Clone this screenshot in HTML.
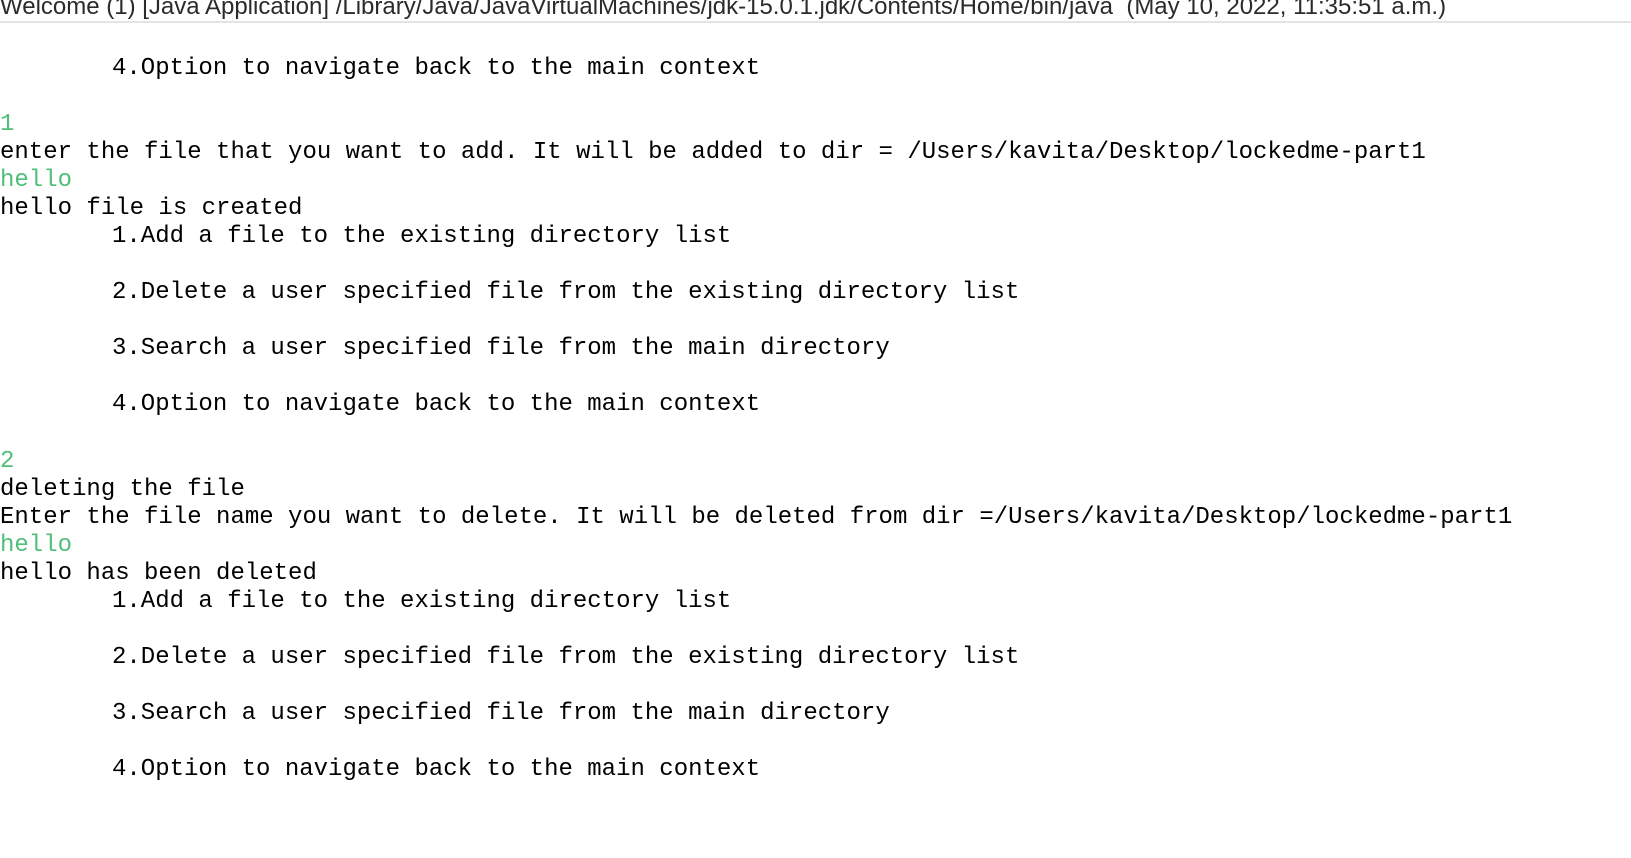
<!DOCTYPE html>
<html><head><meta charset="utf-8"><style>
html,body{margin:0;padding:0;background:#fff;width:1631px;height:858px;overflow:hidden;}
.hdr{position:absolute;left:0;top:-6px;font-family:"Liberation Sans",sans-serif;font-size:24px;color:#2b2b2b;white-space:pre;line-height:26px;}
.sep{position:absolute;left:0;top:21px;width:1631px;height:2px;background:#e4e4e4;}
.con{position:absolute;left:0;top:54.5px;font-family:"Liberation Mono",monospace;font-size:24px;line-height:28.08px;color:#000;}
.con div{height:28.08px;white-space:pre;}
.i{padding-left:112px;}
.g{color:#4fbf79;}
</style></head><body>
<div class="hdr">Welcome (1) [Java Application] /Library/Java/JavaVirtualMachines/jdk-15.0.1.jdk/Contents/Home/bin/java  (May 10, 2022, 11:35:51 a.m.)</div>
<div class="sep"></div>
<div class="con">
<div class="i">4.Option to navigate back to the main context</div>
<div></div>
<div class="g">1</div>
<div>enter the file that you want to add. It will be added to dir = /Users/kavita/Desktop/lockedme-part1</div>
<div class="g">hello</div>
<div>hello file is created</div>
<div class="i">1.Add a file to the existing directory list</div>
<div></div>
<div class="i">2.Delete a user specified file from the existing directory list</div>
<div></div>
<div class="i">3.Search a user specified file from the main directory</div>
<div></div>
<div class="i">4.Option to navigate back to the main context</div>
<div></div>
<div class="g">2</div>
<div>deleting the file</div>
<div>Enter the file name you want to delete. It will be deleted from dir =/Users/kavita/Desktop/lockedme-part1</div>
<div class="g">hello</div>
<div>hello has been deleted</div>
<div class="i">1.Add a file to the existing directory list</div>
<div></div>
<div class="i">2.Delete a user specified file from the existing directory list</div>
<div></div>
<div class="i">3.Search a user specified file from the main directory</div>
<div></div>
<div class="i">4.Option to navigate back to the main context</div>
</div>
</body></html>
